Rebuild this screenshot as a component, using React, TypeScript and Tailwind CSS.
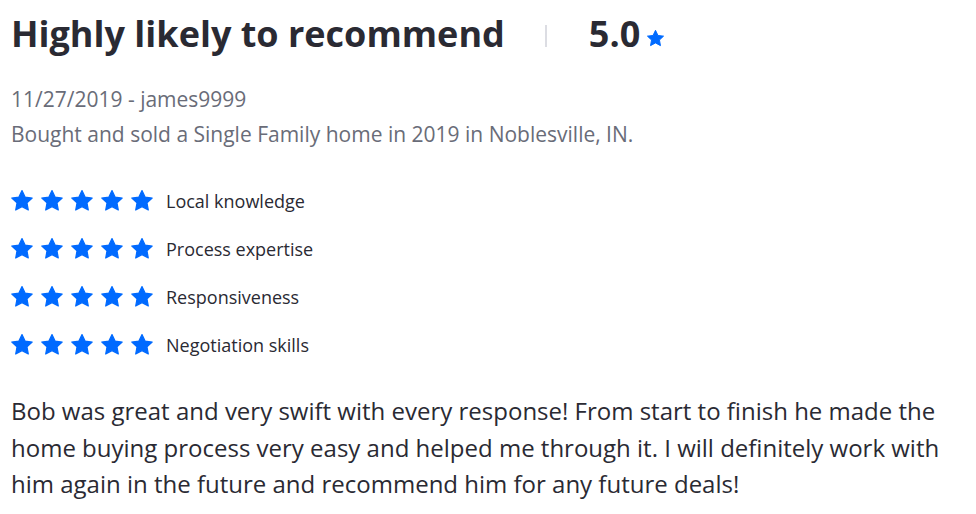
import React from "react";

const Star = ({ className }: { className: string }) => (
  <svg viewBox="0 0 24 24" className={className} fill="#006aff">
    <path d="M12 1.6l3.1 6.5 7.1.9-5.2 4.9 1.3 7.1L12 17.6l-6.3 3.4 1.3-7.1L1.8 9l7.1-.9z" strokeLinejoin="round" stroke="#006aff" strokeWidth="1.2" />
  </svg>
);

const cats = ["Local knowledge", "Process expertise", "Responsiveness", "Negotiation skills"];

export default function App() {
  return (
    <div className="bg-white w-[976px] h-[514px] pl-[11px] pt-[12px] text-[#2a2a33]" style={{ fontFamily: '"Open Sans", sans-serif' }}>
      <div className="flex items-center h-[44px]">
        <h1 className="text-[36px] font-bold leading-[44px]">Highly likely to recommend</h1>
        <div className="w-[2px] h-[22px] bg-[#dcdde3] ml-[40px] mt-[3px]" />
        <span className="text-[36px] font-bold leading-[44px] ml-[42px]">5.0</span>
        <Star className="w-[19px] h-[19px] ml-[6px] mt-[8px]" />
      </div>
      <div className="mt-[26px] text-[21px] leading-[35px] text-[#696c78]">
        <div>11/27/2019 - james9999</div>
        <div>Bought and sold a Single Family home in 2019 in Noblesville, IN.</div>
      </div>
      <div className="mt-[37px] flex flex-col gap-[24px]">
        {cats.map((c) => (
          <div key={c} className="flex items-center h-[24px]">
            <div className="flex gap-[6px] -ml-[1px]">
              {[0, 1, 2, 3, 4].map((i) => (
                <Star key={i} className="w-[24px] h-[24px]" />
              ))}
            </div>
            <span className="ml-[12px] text-[18px]">{c}</span>
          </div>
        ))}
      </div>
      <p className="mt-[36px] text-[24px] leading-[36.5px] w-[945px]">
        Bob was great and very swift with every response! From start to finish he made the home buying process very easy and helped me through it. I will definitely work with him again in the future and recommend him for any future deals!
      </p>
    </div>
  );
}
